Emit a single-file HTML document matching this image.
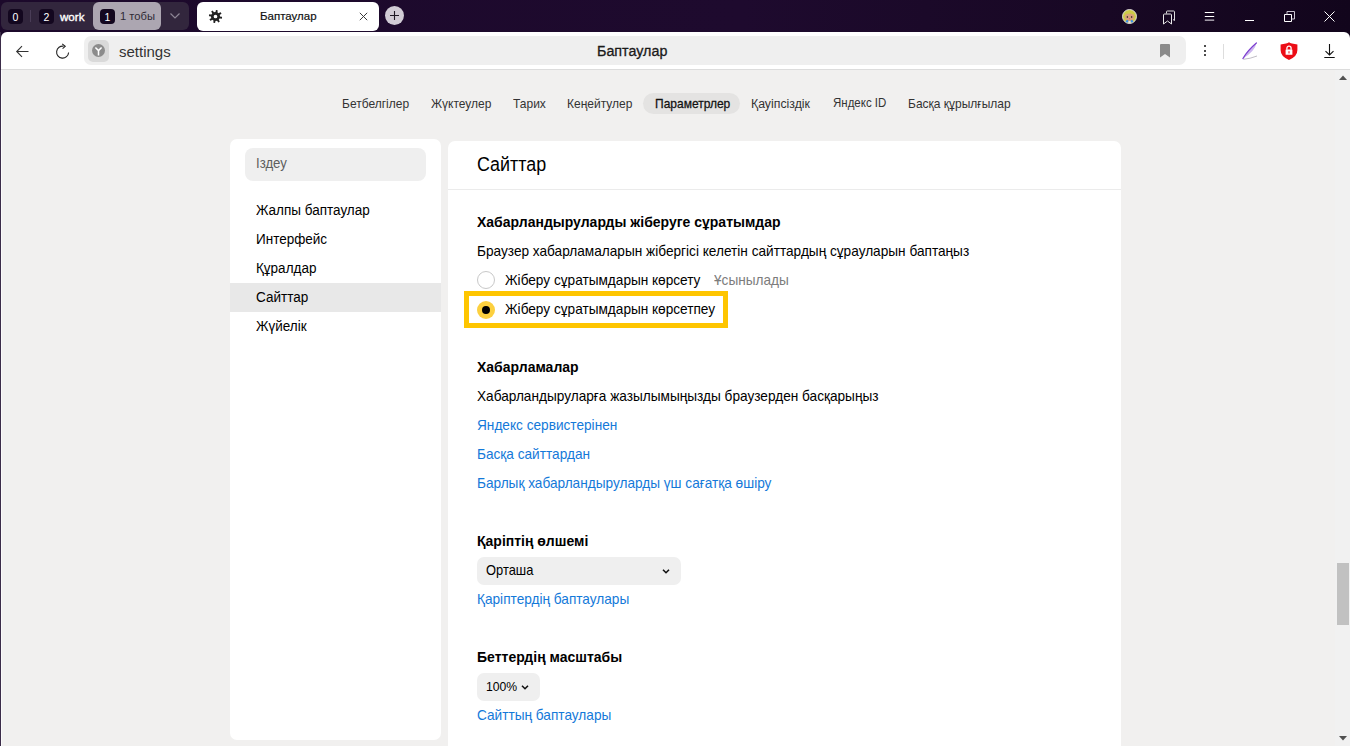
<!DOCTYPE html>
<html><head><meta charset="utf-8">
<style>
*{box-sizing:border-box;margin:0;padding:0}
html,body{width:1350px;height:746px;overflow:hidden}
body{background:linear-gradient(90deg,#1c092b 0%,#1e0a2e 55%,#180824 82%,#12051c 100%);font-family:"Liberation Sans",sans-serif;position:relative;color:#000}
.a{position:absolute}
.t{position:absolute;white-space:nowrap;line-height:1}
.s{transform-origin:0 85%;transform:scaleY(1.08)}
/* tab bar */
#grp{left:1px;top:2px;width:188px;height:28px;background:#32263d;border-radius:6px}
.badge{position:absolute;width:15px;height:15px;background:#13071f;border-radius:4px;color:#fff;font-size:10.5px;font-weight:400;text-align:center;line-height:16px}
#hl{left:93px;top:2px;width:68px;height:28px;background:#aca6b1;border-radius:6px}
#stab{left:197px;top:2px;width:182px;height:29px;background:#fff;border-radius:6px}
#plus{left:385px;top:6px;width:19px;height:19px;border-radius:50%;background:#d1ccd5}
/* toolbar */
#tool{left:1px;top:32px;width:1349px;height:37px;background:#fff;border-radius:6px 6px 0 0}
#tline{left:1px;top:69px;width:1349px;height:1px;background:#dcdcdc}
#page{left:1px;top:70px;width:1349px;height:676px;background:#f1f0ef}
#lstrip{left:0;top:32px;width:1px;height:714px;background:#3b2c49}
#addr{left:84px;top:36px;width:1102px;height:29px;background:#efefef;border-radius:7px}
#ybox{left:88px;top:40px;width:21px;height:22px;background:#d9d9d9;border-radius:5px}
/* nav */
.nav{font-size:12px;color:#333;top:98px}
#pill{left:643px;top:93px;width:97px;height:21px;border-radius:11px;background:#e4e3e2}
/* panels */
#lp{left:230px;top:139px;width:211px;height:601px;background:#fff;border-radius:7px}
#search{left:245px;top:148px;width:181px;height:33px;background:#efefef;border-radius:8px}
.side{font-size:13.5px;color:#000;left:256px}
#sel{left:230px;top:283px;width:211px;height:29px;background:#e8e8e8}
#rp{left:448px;top:141px;width:673px;height:620px;background:#fff;border-radius:7px}
#rline{left:448px;top:189px;width:673px;height:1px;background:#ebebeb}
.h{font-size:14px;font-weight:700;left:477px}
.p{font-size:13.65px;left:477px}
.lnk{color:#1479d9}
/* scrollbar */
#sb{left:1335px;top:70px;width:15px;height:676px;background:#f1f1f1}
#thumb{left:1337px;top:563px;width:12px;height:62px;background:#c1c1c1}
</style></head><body>
<!-- tab bar -->
<div id="grp" class="a"></div>
<div class="badge" style="left:8px;top:9px">0</div>
<div class="a" style="left:30px;top:10px;width:1px;height:12px;background:#4a3d57"></div>
<div class="badge" style="left:39px;top:9px">2</div>
<div class="t" style="left:60px;top:11px;font-size:11.6px;color:#fff;-webkit-text-stroke:0.35px #fff">work</div>
<div id="hl" class="a"></div>
<div class="badge" style="left:100px;top:9px">1</div>
<div class="t" style="left:120px;top:11px;font-size:11.2px;color:#2f2a35">1 тобы</div>
<svg class="a" style="left:169px;top:12px" width="12" height="8" viewBox="0 0 12 8"><path d="M1.5 1.5 L6 6 L10.5 1.5" fill="none" stroke="#8d8595" stroke-width="1.2"/></svg>
<div id="stab" class="a"></div>
<div class="t" style="left:260px;top:11px;font-size:11.5px;color:#111;-webkit-text-stroke:0.2px #111">Баптаулар</div>
<div id="plus" class="a"></div>
<!-- icons tab bar -->
<svg class="a" style="left:208px;top:9px" width="15" height="15" viewBox="-7.5 -7.5 15 15"><g fill="#222"><rect x="-0.95" y="-6.6" width="1.9" height="3" rx="0.4" transform="rotate(12)"/><rect x="-0.95" y="-6.6" width="1.9" height="3" rx="0.4" transform="rotate(57)"/><rect x="-0.95" y="-6.6" width="1.9" height="3" rx="0.4" transform="rotate(102)"/><rect x="-0.95" y="-6.6" width="1.9" height="3" rx="0.4" transform="rotate(147)"/><rect x="-0.95" y="-6.6" width="1.9" height="3" rx="0.4" transform="rotate(192)"/><rect x="-0.95" y="-6.6" width="1.9" height="3" rx="0.4" transform="rotate(237)"/><rect x="-0.95" y="-6.6" width="1.9" height="3" rx="0.4" transform="rotate(282)"/><rect x="-0.95" y="-6.6" width="1.9" height="3" rx="0.4" transform="rotate(327)"/></g><circle r="3.2" fill="none" stroke="#222" stroke-width="2.7"/></svg>
<svg class="a" style="left:359px;top:12px" width="9" height="9" viewBox="0 0 9 9"><path d="M0.8 0.8L8.2 8.2M8.2 0.8L0.8 8.2" stroke="#3a3a3a" stroke-width="1"/></svg>
<svg class="a" style="left:385px;top:6px" width="19" height="19" viewBox="0 0 19 19"><path d="M9.5 5V14M5 9.5H14" stroke="#1f1a24" stroke-width="1.1"/></svg>
<!-- right tab bar icons -->
<svg class="a" style="left:1122px;top:9px" width="15" height="15" viewBox="0 0 15 15"><circle cx="7.5" cy="7.5" r="7" fill="#cdcb48" stroke="#e6e3ea" stroke-width="0.9"/><path d="M2.8 7.5 Q3 4.2 7.5 4.5 Q12 4.2 12.2 7.5 Q12 11.5 7.5 12 Q3 11.5 2.8 7.5Z" fill="#d9a27a"/><path d="M3 5Q7 2 12 5" stroke="#cdcb48" stroke-width="1.6" fill="none"/><circle cx="5.4" cy="8" r="0.75" fill="#111"/><circle cx="9.6" cy="8" r="0.75" fill="#111"/><circle cx="7.5" cy="9.6" r="0.55" fill="#e0508a"/><circle cx="5.2" cy="12.2" r="1.3" fill="#3a8ce8"/><circle cx="9.8" cy="12.2" r="1.3" fill="#3a8ce8"/><rect x="6.4" y="12" width="2.2" height="2.3" fill="#e8e0e0"/></svg>
<svg class="a" style="left:1162px;top:10px" width="14" height="15" viewBox="0 0 14 15"><path d="M4.5 3.5 V1.8 Q4.5 1 5.3 1 H11.7 Q12.5 1 12.5 1.8 V10.5 L11 9.5" fill="none" stroke="#ddd" stroke-width="1"/><path d="M1.5 5 Q1.5 4 2.5 4 H8.5 Q9.5 4 9.5 5 V14 L5.5 11 L1.5 14 Z" fill="none" stroke="#e8e8e8" stroke-width="1" stroke-linejoin="round"/></svg>
<svg class="a" style="left:1204px;top:11px" width="11" height="11" viewBox="0 0 11 11"><path d="M0.8 1.5H10.2M0.8 5.5H10.2" stroke="#fff" stroke-width="1.1"/><path d="M0.8 9.2H10.2" stroke="#9d96a3" stroke-width="1.6"/></svg>
<div class="a" style="left:1245px;top:20px;width:9px;height:1px;background:#fff"></div>
<svg class="a" style="left:1284px;top:11px" width="11" height="11" viewBox="0 0 11 11"><path d="M0.5 3.5H7.5V10.5H0.5Z" fill="none" stroke="#fff" stroke-width="1"/><path d="M3 3.5V0.5H10.5V8H7.5" fill="none" stroke="#c9c3cf" stroke-width="1"/></svg>
<svg class="a" style="left:1324px;top:11px" width="11" height="11" viewBox="0 0 11 11"><path d="M0.5 0.5L10.5 10.5M10.5 0.5L0.5 10.5" stroke="#fff" stroke-width="1"/></svg>


<!-- toolbar -->
<div id="lstrip" class="a"></div>
<div id="tool" class="a"></div>
<div id="tline" class="a"></div>
<div id="page" class="a"></div>
<div class="a" style="left:1px;top:70px;width:1px;height:676px;background:#fbfbfb"></div>
<div id="addr" class="a"></div>
<div id="ybox" class="a"></div>

<!-- toolbar icons -->
<svg class="a" style="left:15px;top:44px" width="14" height="14" viewBox="0 0 14 14"><path d="M13.5 7.5H1.8M7 2.2L1.7 7.5L7 12.8" fill="none" stroke="#333" stroke-width="1.1"/></svg>
<svg class="a" style="left:55px;top:43px" width="16" height="16" viewBox="0 0 16 16"><path d="M13.6 9.5A6 6 0 1 1 8.6 3.2" fill="none" stroke="#222" stroke-width="1.1"/><path d="M7.2 0.9L10.2 3.3L7.6 5.6" fill="none" stroke="#222" stroke-width="1.1"/></svg>
<svg class="a" style="left:92px;top:44px" width="13" height="13" viewBox="0 0 13 13"><circle cx="6.5" cy="6.5" r="6.5" fill="#8c8c8c"/><path d="M3.4 3.4L6.5 6.6L9.6 3.4M6.5 6.6V11.5" fill="none" stroke="#fff" stroke-width="1.5"/></svg>
<svg class="a" style="left:1160px;top:44px" width="10" height="14" viewBox="0 0 10 14"><path d="M0 1Q0 0 1 0H9Q10 0 10 1V13.5L5 10L0 13.5Z" fill="#8a8a8a"/></svg>
<div class="a" style="left:1203.6px;top:45.3px;width:2.2px;height:2.2px;border-radius:50%;background:#111"></div>
<div class="a" style="left:1203.6px;top:49.7px;width:2.2px;height:2.2px;border-radius:50%;background:#111"></div>
<div class="a" style="left:1203.6px;top:54px;width:2.2px;height:2.2px;border-radius:50%;background:#111"></div>
<div class="a" style="left:1223px;top:44px;width:1px;height:15px;background:#ddd"></div>
<svg class="a" style="left:1241px;top:42px" width="18" height="18" viewBox="0 0 18 18"><path d="M1.9 16.6 Q6 8.5 15.4 1 Q14.5 8.5 1.9 16.6Z" fill="#cbb5ee"/><path d="M1.9 16.6 Q6.5 8.5 15.4 1" fill="none" stroke="#7d3fcf" stroke-width="1.2" stroke-linecap="round"/><path d="M2.4 17.3 Q9 16.8 16 14" fill="none" stroke="#b0acb6" stroke-width="1" opacity="0.8"/></svg>
<svg class="a" style="left:1280px;top:42px" width="18" height="18" viewBox="0 0 18 18"><path d="M9 0.2Q10 1.2 12 1.5L17.4 2.6V8Q17.4 14.5 9 17.9Q0.6 14.5 0.6 8V2.6L6 1.5Q8 1.2 9 0.2Z" fill="#ec0d16"/><rect x="5.6" y="7.6" width="6.8" height="5.2" rx="0.3" fill="#fff"/><path d="M6.9 7.8V6.3A2.1 2.1 0 0 1 11.1 6.3V7.8" fill="none" stroke="#fff" stroke-width="1.3"/><rect x="8.5" y="9.2" width="1" height="2.2" fill="#ec0d16"/></svg>
<svg class="a" style="left:1323px;top:43px" width="13" height="15" viewBox="0 0 13 15"><path d="M6.5 1V12M2.5 8.2L6.5 12L10.5 8.2M1.3 14.5H11.7" fill="none" stroke="#111" stroke-width="1.1"/></svg>
<div class="t" style="left:119px;top:44px;font-size:15px;color:#333">settings</div>
<div class="t s" style="left:597px;top:44px;font-size:14.3px;color:#1a1a1a;-webkit-text-stroke:0.3px #1a1a1a">Баптаулар</div>

<!-- nav -->
<div id="pill" class="a"></div>
<div class="t s nav" style="left:342px">Бетбелгілер</div>
<div class="t s nav" style="left:431px">Жүктеулер</div>
<div class="t s nav" style="left:513px">Тарих</div>
<div class="t s nav" style="left:567px">Кеңейтулер</div>
<div class="t s nav" style="left:655px;color:#111;-webkit-text-stroke:0.25px #111">Параметрлер</div>
<div class="t s nav" style="left:751px;font-size:12.3px">Қауіпсіздік</div>
<div class="t s nav" style="left:833px;font-size:11.5px">Яндекс ID</div>
<div class="t s nav" style="left:908px">Басқа құрылғылар</div>

<!-- left panel -->
<div id="lp" class="a"></div>
<div id="search" class="a"></div>
<div class="t s" style="left:256px;top:157px;font-size:13.2px;color:#5e5e5e">Іздеу</div>
<div id="sel" class="a"></div>
<div class="t s side" style="top:204px">Жалпы баптаулар</div>
<div class="t s side" style="top:233px">Интерфейс</div>
<div class="t s side" style="top:262px">Құралдар</div>
<div class="t s side" style="top:291px">Сайттар</div>
<div class="t s side" style="top:320px">Жүйелік</div>

<!-- right panel -->
<div id="rp" class="a"></div>
<div id="rline" class="a"></div>
<div class="t s" style="left:477px;top:157px;font-size:17.9px">Сайттар</div>

<div class="t s h" style="top:215px">Хабарландыруларды жіберуге сұратымдар</div>
<div class="t s p" style="top:245px">Браузер хабарламаларын жібергісі келетін сайттардың сұрауларын баптаңыз</div>
<div class="a" style="left:477px;top:271px;width:18px;height:18px;border:1px solid #c8c8c8;border-radius:50%"></div>
<div class="t s p" style="left:505px;top:274px">Жіберу сұратымдарын көрсету</div>
<div class="t s p" style="left:714px;top:274px;color:#7c7c7c">Ұсынылады</div>
<div class="a" style="left:464px;top:291px;width:264px;height:37px;border:5px solid #fec500"></div>
<div class="a" style="left:477px;top:300.5px;width:18px;height:18px;background:#fcd03f;border-radius:50%"></div>
<div class="a" style="left:482.3px;top:305.8px;width:7.8px;height:7.8px;background:#000;border-radius:50%"></div>
<div class="t s p" style="left:505px;top:303px">Жіберу сұратымдарын көрсетпеу</div>

<div class="t s h" style="top:360px">Хабарламалар</div>
<div class="t s p" style="top:390px">Хабарландыруларға жазылымыңызды браузерден басқарыңыз</div>
<div class="t s p lnk" style="top:419px">Яндекс сервистерінен</div>
<div class="t s p lnk" style="top:448px">Басқа сайттардан</div>
<div class="t s p lnk" style="top:477px">Барлық хабарландыруларды үш сағатқа өшіру</div>

<div class="t s h" style="top:534px">Қаріптің өлшемі</div>
<div class="a" style="left:477px;top:557px;width:204px;height:28px;background:#efefef;border-radius:7px"></div>
<div class="t s p" style="left:486px;top:565px;font-size:12.9px">Орташа</div>
<div class="t s p lnk" style="top:593px">Қаріптердің баптаулары</div>

<div class="t s h" style="top:650px">Беттердің масштабы</div>
<div class="a" style="left:477px;top:673px;width:63px;height:28px;background:#efefef;border-radius:7px"></div>
<div class="t s p" style="left:486px;top:681px;font-size:12.2px">100%</div>
<div class="t s p lnk" style="top:709px">Сайттың баптаулары</div>

<!-- scrollbar -->
<div id="sb" class="a"></div>
<div id="thumb" class="a"></div>

<!-- scrollbar arrows & chevrons -->
<svg class="a" style="left:1339px;top:75px" width="8" height="5" viewBox="0 0 8 5"><path d="M0 5L4 0.5L8 5Z" fill="#505050"/></svg>
<svg class="a" style="left:1339px;top:736px" width="8" height="5" viewBox="0 0 8 5"><path d="M0 0L4 4.5L8 0Z" fill="#505050"/></svg>
<svg class="a" style="left:662px;top:568px" width="8" height="7" viewBox="0 0 8 7"><path d="M1 1.7L4 4.7L7 1.7" fill="none" stroke="#111" stroke-width="1.6"/></svg>
<svg class="a" style="left:521px;top:684px" width="8" height="7" viewBox="0 0 8 7"><path d="M1 1.7L4 4.7L7 1.7" fill="none" stroke="#111" stroke-width="1.6"/></svg>
</body></html>
